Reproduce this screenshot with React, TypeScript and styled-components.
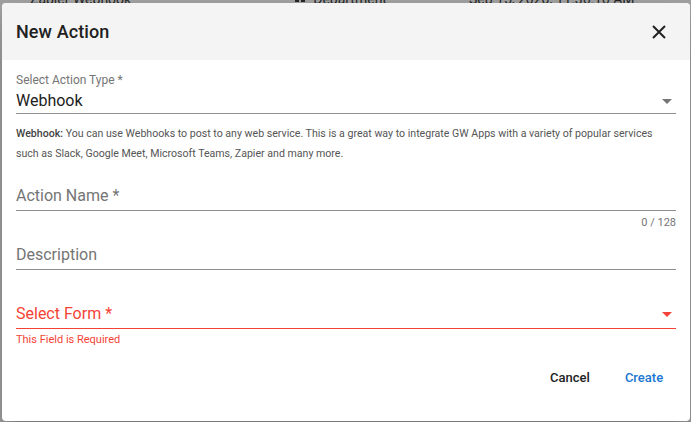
import React from 'react';
import styled, { createGlobalStyle } from 'styled-components';

const GlobalStyle = createGlobalStyle`
  html, body {
    margin: 0;
    padding: 0;
    background: #9f9f9f;
    font-family: Roboto, "Liberation Sans", sans-serif;
    overflow: hidden;
  }
`;

const Page = styled.div`
  position: relative;
  width: 691px;
  height: 422px;
  background: #9f9f9f;
  overflow: hidden;
`;

const BackdropRow = styled.div`
  display: flex;
  align-items: center;
  height: 20px;
  margin-top: -11px;
  font-size: 14px;
  color: #262626;
`;

const BackdropCell = styled.div<{ $left: number }>`
  display: flex;
  align-items: center;
  gap: 8px;
  margin-left: ${p => p.$left}px;
`;

const Dialog = styled.div`
  position: absolute;
  top: 3px;
  left: 2px;
  width: 688px;
  height: 418px;
  background: #fff;
  border-radius: 4px;
  overflow: hidden;
  display: flex;
  flex-direction: column;
  box-shadow: 0 11px 15px -7px rgba(0, 0, 0, 0.2), 0 24px 38px 3px rgba(0, 0, 0, 0.14);
`;

const Header = styled.div`
  display: flex;
  align-items: center;
  justify-content: space-between;
  height: 57px;
  padding: 0 14px;
  background: #f4f4f4;
`;

const Title = styled.h2`
  margin: 0;
  font-size: 18px;
  font-weight: 500;
  color: #212121;
  letter-spacing: 0.1px;
`;

const CloseButton = styled.button`
  display: flex;
  align-items: center;
  justify-content: center;
  width: 24px;
  height: 24px;
  margin-right: 5px;
  padding: 0;
  border: none;
  background: transparent;
  cursor: pointer;
`;

const Body = styled.div`
  display: flex;
  flex-direction: column;
  padding: 0 14px;
`;

const Field = styled.div<{ $top: number }>`
  display: flex;
  flex-direction: column;
  margin-top: ${p => p.$top}px;
`;

const SmallLabel = styled.div`
  height: 16px;
  line-height: 17px;
  font-size: 12px;
  color: #757575;
`;

const InputRow = styled.div<{ $height: number; $error?: boolean }>`
  display: flex;
  align-items: center;
  justify-content: space-between;
  height: ${p => p.$height}px;
  border-bottom: 1px solid ${p => (p.$error ? '#f44336' : '#8f8f8f')};
  font-size: 16px;
  color: ${p => (p.$error ? '#f44336' : '#757575')};
`;

const Value = styled.span`
  color: #212121;
`;

const ArrowIcon = styled.svg`
  width: 24px;
  height: 24px;
  margin-right: -3px;
`;

const HelpText = styled.p`
  margin: 10px 0 0;
  font-size: 10.6px;
  line-height: 20px;
  color: #555;

  b {
    font-weight: 500;
    color: #444;
  }
`;

const Counter = styled.div`
  margin-top: 4px;
  height: 16px;
  line-height: 16px;
  font-size: 11px;
  color: #757575;
  text-align: right;
`;

const ErrorText = styled.div`
  margin-top: 2px;
  height: 16px;
  line-height: 17px;
  font-size: 11px;
  color: #f44336;
`;

const Actions = styled.div`
  display: flex;
  justify-content: flex-end;
  gap: 10px;
  margin-top: 12px;
  padding: 0 14px;
`;

const Button = styled.button<{ $primary?: boolean }>`
  min-width: 64px;
  height: 36px;
  padding: 6px 8px;
  border: none;
  background: transparent;
  font-family: Roboto, "Liberation Sans", sans-serif;
  font-size: 13px;
  font-weight: 500;
  color: ${p => (p.$primary ? '#1976d2' : '#212121')};
  cursor: pointer;
`;

const Arrow = ({ color }: { color: string }) => (
  <ArrowIcon viewBox="0 0 24 24">
    <path d="M7 10l5 5 5-5z" fill={color} />
  </ArrowIcon>
);

const App = () => {
  return (
    <Page>
      <GlobalStyle />
      <BackdropRow>
        <BackdropCell $left={30}>Zapier Webhook</BackdropCell>
        <BackdropCell $left={164}>
          <svg width="10" height="10" viewBox="0 0 10 10">
            <rect x="0" y="2" width="4" height="6" fill="#262626" />
            <rect x="6" y="2" width="4" height="6" fill="#262626" />
          </svg>
          Department
        </BackdropCell>
        <BackdropCell $left={82}>Sep 15, 2020, 11:36:16 AM</BackdropCell>
      </BackdropRow>

      <Dialog>
        <Header>
          <Title>New Action</Title>
          <CloseButton aria-label="close">
            <svg width="14" height="14" viewBox="0 0 14 14">
              <path d="M1 1L13 13M13 1L1 13" stroke="#212121" strokeWidth="2" />
            </svg>
          </CloseButton>
        </Header>

        <Body>
          <Field $top={12}>
            <SmallLabel>Select Action Type *</SmallLabel>
            <InputRow $height={25}>
              <Value>Webhook</Value>
              <Arrow color="#757575" />
            </InputRow>
          </Field>

          <HelpText>
            <b>Webhook:</b> You can use Webhooks to post to any web service. This is a great way to integrate GW Apps
            with a variety of popular services such as Slack, Google Meet, Microsoft Teams, Zapier and many more.
          </HelpText>

          <Field $top={17}>
            <InputRow $height={29}>Action Name *</InputRow>
            <Counter>0 / 128</Counter>
          </Field>

          <Field $top={9}>
            <InputRow $height={29}>Description</InputRow>
          </Field>

          <Field $top={29}>
            <InputRow $height={29} $error>
              <span>Select Form *</span>
              <Arrow color="#f44336" />
            </InputRow>
            <ErrorText>This Field is Required</ErrorText>
          </Field>
        </Body>

        <Actions>
          <Button>Cancel</Button>
          <Button $primary>Create</Button>
        </Actions>
      </Dialog>
    </Page>
  );
};

export default App;
